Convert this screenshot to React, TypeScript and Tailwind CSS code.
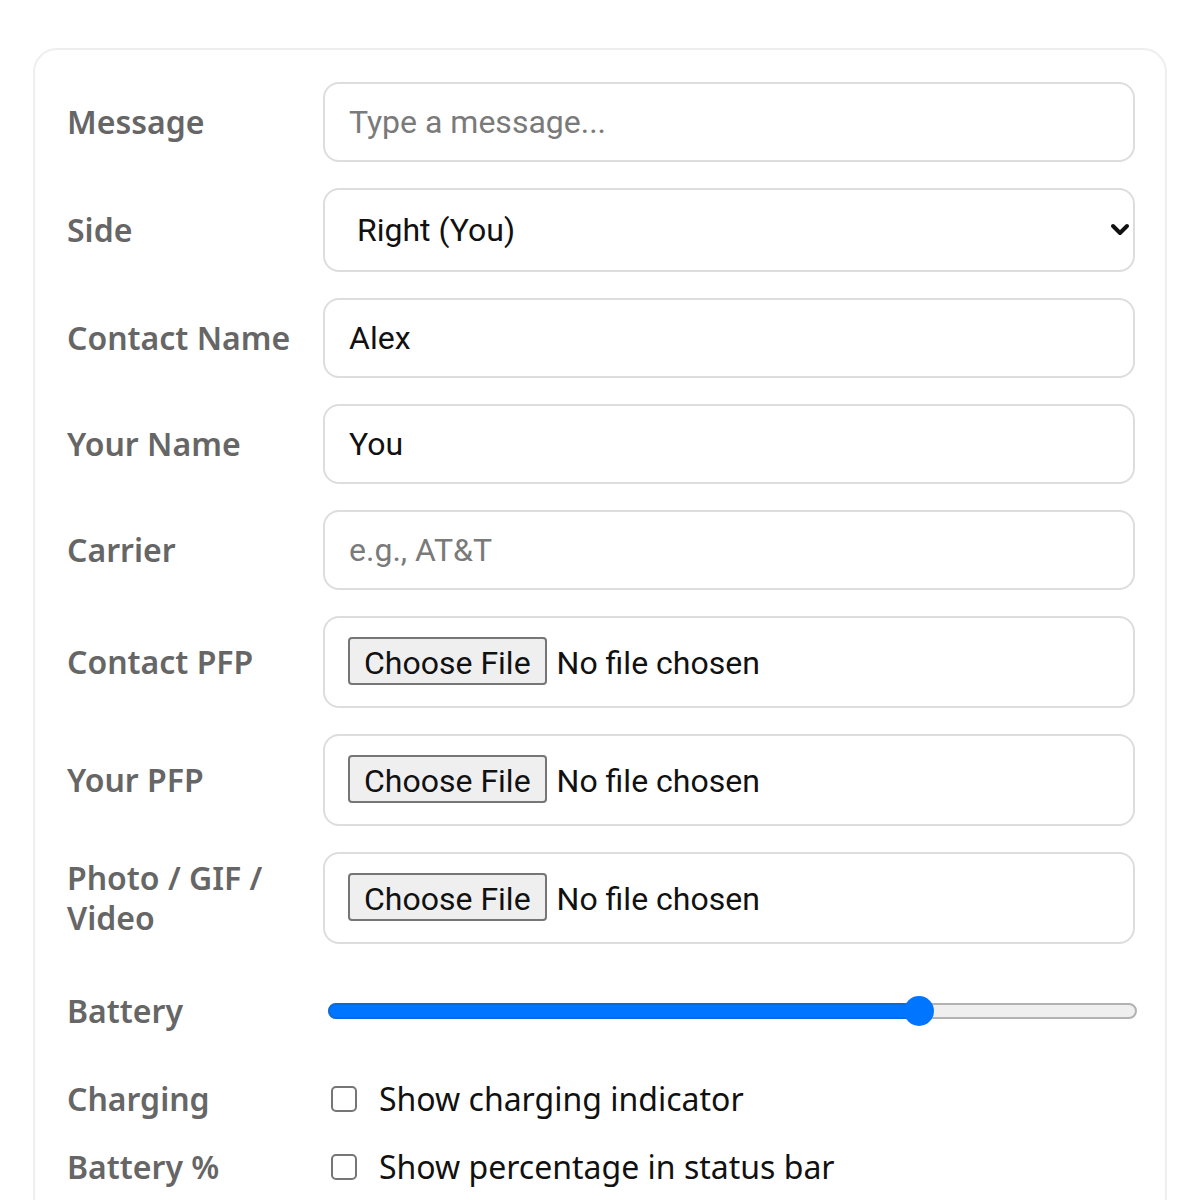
import { useState } from 'react';

const labelCls =
  "w-[240px] shrink-0 font-['Noto_Sans','Open_Sans',sans-serif] text-[32px] font-semibold leading-[40px] text-[#666]";

const boxCls =
  "w-full rounded-[16px] border-2 border-[#ddd] bg-white font-['Roboto',sans-serif] text-[32px] text-[#111] outline-none";

function Row({ label, children, h }: { label: string; children: React.ReactNode; h?: string }) {
  return (
    <div className={`flex items-center gap-4 ${h ?? ''}`}>
      <label className={labelCls}>{label}</label>
      <div className="flex-1 min-w-0">{children}</div>
    </div>
  );
}

function FilePicker() {
  return (
    <div className={`${boxCls} h-[92px] flex items-center px-[23px]`}>
      <input
        type="file"
        className="w-full font-['Roboto',sans-serif] text-[32px] text-[#111] file:mr-[10px] file:h-[48px] file:px-[14px] file:rounded-[4px] file:border-2 file:border-solid file:border-[#767676] file:bg-[#efefef] file:text-[#111] file:font-['Roboto',sans-serif] file:text-[32px]"
      />
    </div>
  );
}

function Slider({ value }: { value: number }) {
  // thumb travels inside the track, so keep its half-width at both ends
  const pct = value / 100;
  return (
    <div className="relative h-[32px] ml-[5px] mr-[-2px] flex items-center">
      <div className="w-full h-[16px] rounded-full bg-[#efefef] border-2 border-[#b2b2b2]" />
      <div
        className="absolute left-0 h-[16px] rounded-full bg-[#0075ff] border-2 border-[#0a6be0]"
        style={{ width: `calc(15px + (100% - 30px) * ${pct})` }}
      />
      <div
        className="absolute w-[30px] h-[30px] rounded-full bg-[#0075ff]"
        style={{ left: `calc((100% - 30px) * ${pct})` }}
      />
    </div>
  );
}

function Check({ text }: { text: string }) {
  return (
    <label className="flex items-center gap-[22px] ml-[8px]">
      <input
        type="checkbox"
        className="appearance-none m-0 w-[26px] h-[26px] rounded-[5px] border-2 border-[#767676] bg-white"
      />
      <span className="font-['Noto_Sans',sans-serif] text-[32px] text-[#111]">{text}</span>
    </label>
  );
}

export default function App() {
  const [side, setSide] = useState('right');

  return (
    <div className="min-h-[1200px] bg-white pt-[48px] px-[33px]">
      <div className="rounded-[24px] border-2 border-[#eee] pt-[32px] pb-[40px] pl-[32px] pr-[30px] flex flex-col gap-[26px]">
        <Row label="Message">
          <input className={`${boxCls} h-[80px] px-[24px] placeholder:text-[#7a7a7a]`} placeholder="Type a message..." />
        </Row>

        <Row label="Side">
          <div className="relative">
            <select
              value={side}
              onChange={(e) => setSide(e.target.value)}
              className={`${boxCls} h-[84px] pl-[32px] pr-[60px] appearance-none`}
            >
              <option value="left">Left (Contact)</option>
              <option value="right">Right (You)</option>
            </select>
            <svg
              className="absolute right-[5px] top-[35px] pointer-events-none"
              width="20"
              height="13"
              viewBox="0 0 20 13"
              fill="none"
            >
              <path d="M3 3 L10 10 L17 3" stroke="#111" strokeWidth="4" strokeLinecap="round" strokeLinejoin="round" />
            </svg>
          </div>
        </Row>

        <Row label="Contact Name">
          <input className={`${boxCls} h-[80px] px-[24px]`} defaultValue="Alex" />
        </Row>

        <Row label="Your Name">
          <input className={`${boxCls} h-[80px] px-[24px]`} defaultValue="You" />
        </Row>

        <Row label="Carrier">
          <input className={`${boxCls} h-[80px] px-[24px] placeholder:text-[#7a7a7a]`} placeholder="e.g., AT&T" />
        </Row>

        <Row label="Contact PFP">
          <FilePicker />
        </Row>

        <Row label="Your PFP">
          <FilePicker />
        </Row>

        <Row label="Photo / GIF / Video">
          <FilePicker />
        </Row>

        <Row label="Battery" h="h-[82px]">
          <Slider value={74} />
        </Row>

        <Row label="Charging" h="h-[42px]">
          <Check text="Show charging indicator" />
        </Row>

        <Row label="Battery %" h="h-[42px]">
          <Check text="Show percentage in status bar" />
        </Row>
      </div>
    </div>
  );
}
